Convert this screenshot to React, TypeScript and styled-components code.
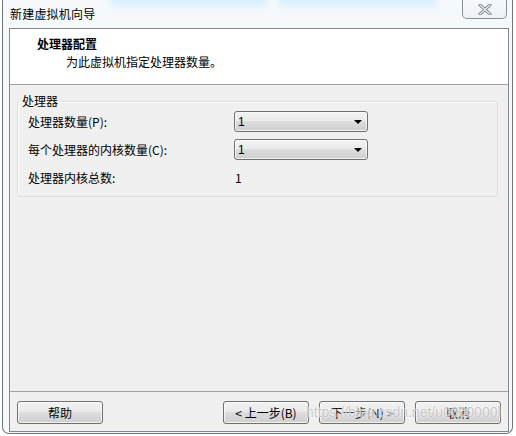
import styled, { createGlobalStyle } from "styled-components"

const GlobalStyle = createGlobalStyle`
    html, body {
        margin: 0;
        padding: 0;
        background: #ffffff;
    }
    body {
        font-family: "Noto Sans CJK SC", "Noto Sans", "Liberation Sans", sans-serif;
        font-size: 12px;
        color: #000;
    }
`

const Window = styled.div`
    position: relative;
    box-sizing: border-box;
    margin-left: 2px;
    width: 511px;
    height: 434px;
    border: 1px solid #6f767d;
    border-top: none;
    border-radius: 0 0 7px 7px;
    background: #f6f9fb;
    display: flex;
    flex-direction: column;
    overflow: hidden;
    &::before {
        content: "";
        position: absolute;
        left: 0;
        top: -6px;
        width: 100%;
        height: 16px;
        background:
            linear-gradient(#cfecfb, #e2f4fd) no-repeat 108px 0 / 156px 14px,
            linear-gradient(#cfecfb, #e2f4fd) no-repeat 276px 0 / 158px 14px;
        filter: blur(3px);
        pointer-events: none;
    }
`

const TitleBar = styled.div`
    position: relative;
    height: 28px;
    display: flex;
    align-items: flex-start;
    padding-left: 7px;
    padding-right: 5px;
`

const TitleText = styled.div`
    line-height: 28px;
    color: #000;
    letter-spacing: 0.2px;
`

const CloseButton = styled.div`
    margin-left: auto;
    box-sizing: border-box;
    width: 45px;
    height: 19px;
    border: 1px solid #8a9097;
    border-top: none;
    border-radius: 0 0 5px 5px;
    background: linear-gradient(#f7f9fb, #eef2f5);
    display: flex;
    align-items: center;
    justify-content: center;
`

const Client = styled.div`
    box-sizing: border-box;
    margin-left: 6px;
    width: 500px;
    height: 404px;
    border: 1px solid #828790;
    background: #f0f0f0;
    display: flex;
    flex-direction: column;
`

const Header = styled.div`
    height: 56px;
    box-sizing: border-box;
    background: #ffffff;
    border-bottom: 1px solid #a0a0a0;
    padding: 7px 0 0 27px;
`

const HeaderTitle = styled.div`
    font-weight: bold;
    line-height: 16px;
`

const HeaderSub = styled.div`
    line-height: 16px;
    margin-top: 2px;
    padding-left: 29px;
`

const Body = styled.div`
    flex: 1;
    padding: 8px 0 0 7px;
`

const GroupBox = styled.fieldset`
    box-sizing: border-box;
    width: 481px;
    height: 104px;
    margin: 0;
    padding: 2px 10px 0 10px;
    border: 1px solid #d5dfe5;
    border-radius: 3px;
    box-shadow: inset 1px 1px 0 #ffffff;
`

const Legend = styled.legend`
    margin-left: -8px;
    padding: 0 2px;
    line-height: 16px;
`

const Grid = styled.div`
    display: grid;
    grid-template-columns: 206px 134px;
    grid-auto-rows: 21px;
    row-gap: 7px;
    align-items: center;
`

const Label = styled.div`
    line-height: 16px;
`

const Value = styled.div`
    padding-left: 1px;
    line-height: 16px;
`

const Combo = styled.div`
    box-sizing: border-box;
    height: 21px;
    border: 1px solid #707070;
    border-radius: 3px;
    background: linear-gradient(#f2f2f2 0%, #ebebeb 45%, #dddddd 50%, #cfcfcf 100%);
    box-shadow: inset 0 0 0 1px rgba(255, 255, 255, 0.7);
    display: flex;
    align-items: center;
    padding: 0 5px 0 3px;
    font-family: "Liberation Sans", "Noto Sans CJK SC", sans-serif;
`

const ComboText = styled.span`
    flex: 1;
`

const Arrow = styled.span`
    width: 0;
    height: 0;
    border-left: 4px solid transparent;
    border-right: 4px solid transparent;
    border-top: 4px solid #000;
`

const Footer = styled.div`
    height: 40px;
    box-sizing: border-box;
    border-top: 1px solid #a0a0a0;
    padding: 9px 0 0 7px;
    display: flex;
    gap: 10px;
`

const Button = styled.div<{ $gapAfter?: boolean }>`
    box-sizing: border-box;
    width: 86px;
    height: 23px;
    border: 1px solid #707070;
    border-radius: 3px;
    background: linear-gradient(#f2f2f2 0%, #ebebeb 45%, #dddddd 50%, #cfcfcf 100%);
    box-shadow: inset 0 0 0 1px rgba(255, 255, 255, 0.7);
    display: flex;
    align-items: center;
    justify-content: center;
    line-height: 16px;
    margin-right: ${p => (p.$gapAfter ? "110px" : "0")};
`

const Watermark = styled.div`
    position: absolute;
    left: 303px;
    top: 402px;
    font-family: "Liberation Sans", Arial, sans-serif;
    font-size: 14px;
    line-height: 20px;
    color: rgba(150, 150, 150, 0.55);
    text-shadow: 0 0 2px #ffffff, 0 0 1px #ffffff;
    white-space: nowrap;
    pointer-events: none;
`

export default function App() {
    return (
        <>
            <GlobalStyle />
            <Window>
                <TitleBar>
                    <TitleText>新建虚拟机向导</TitleText>
                    <CloseButton>
                        <svg width="14" height="11" viewBox="0 0 14 11">
                            <path d="M2 1 L12 10 M12 1 L2 10" stroke="#6b7480" strokeWidth="3" strokeLinecap="round" />
                            <path d="M2 1 L12 10 M12 1 L2 10" stroke="#f4f6f8" strokeWidth="1.2" strokeLinecap="round" />
                        </svg>
                    </CloseButton>
                </TitleBar>
                <Client>
                    <Header>
                        <HeaderTitle>处理器配置</HeaderTitle>
                        <HeaderSub>为此虚拟机指定处理器数量。</HeaderSub>
                    </Header>
                    <Body>
                        <GroupBox>
                            <Legend>处理器</Legend>
                            <Grid>
                                <Label>处理器数量(P):</Label>
                                <Combo>
                                    <ComboText>1</ComboText>
                                    <Arrow />
                                </Combo>
                                <Label>每个处理器的内核数量(C):</Label>
                                <Combo>
                                    <ComboText>1</ComboText>
                                    <Arrow />
                                </Combo>
                                <Label>处理器内核总数:</Label>
                                <Value>1</Value>
                            </Grid>
                        </GroupBox>
                    </Body>
                    <Footer>
                        <Button $gapAfter>帮助</Button>
                        <Button>&lt; 上一步(B)</Button>
                        <Button>下一步(N) &gt;</Button>
                        <Button>取消</Button>
                    </Footer>
                </Client>
                <Watermark>https://blog.csdn.net/u0000000l</Watermark>
            </Window>
        </>
    )
}
